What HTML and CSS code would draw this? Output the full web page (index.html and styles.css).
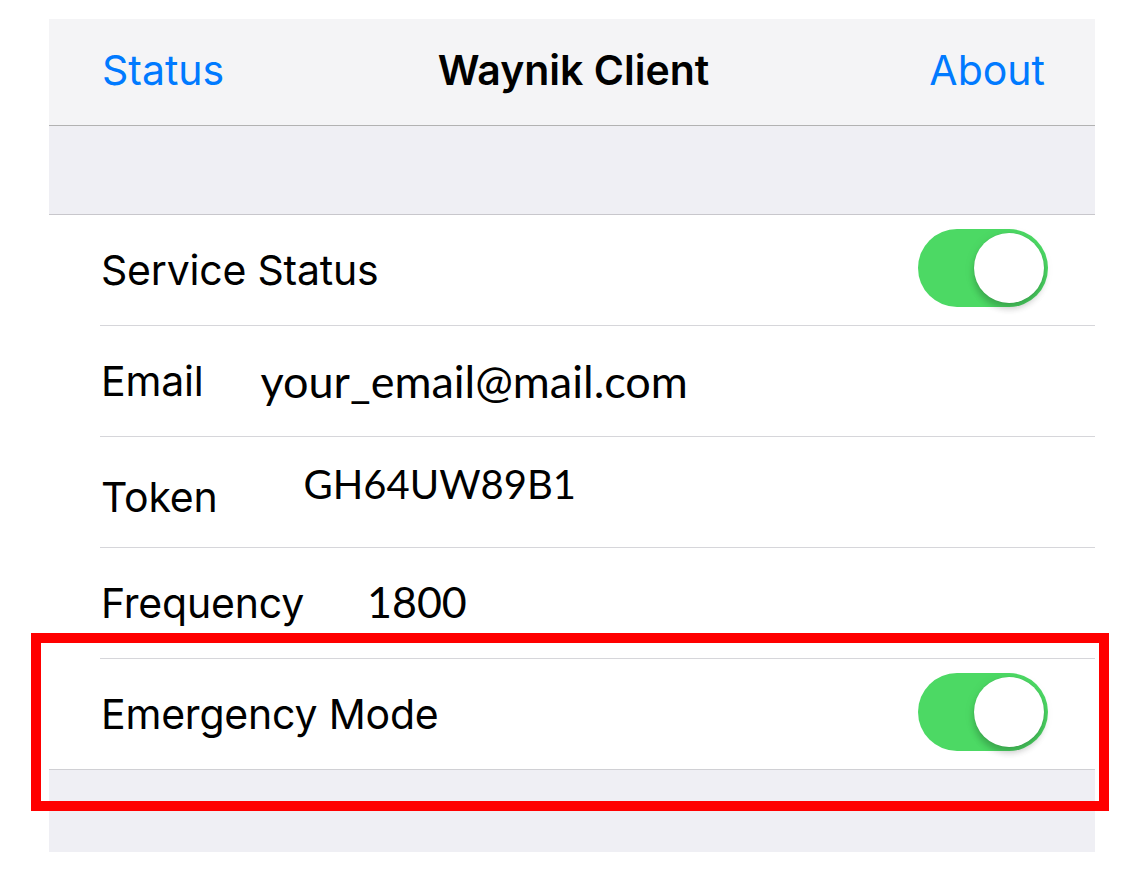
FILE: index.html
```html
<!DOCTYPE html>
<html lang="en">
<head>
<meta charset="utf-8">
<title>Waynik Client</title>
<link rel="stylesheet" href="styles.css">
</head>
<body>
<div class="screen">
  <header class="navbar">
    <span class="nav-link">Status</span>
    <span class="nav-title">Waynik Client</span>
    <span class="nav-link">About</span>
  </header>
  <div class="group-gap"></div>
  <ul class="table">
    <li class="cell">
      <span class="label">Service Status</span>
      <span class="switch"><span class="knob"></span></span>
    </li>
    <li class="cell">
      <span class="label">Email</span>
      <span class="value value-email">your_email@mail.com</span>
    </li>
    <li class="cell">
      <span class="label label-token">Token</span>
      <span class="value value-token">GH64UW89B1</span>
    </li>
    <li class="cell">
      <span class="label">Frequency</span>
      <span class="value value-freq">1800</span>
    </li>
    <li class="cell cell-last">
      <span class="label">Emergency Mode</span>
      <span class="switch"><span class="knob"></span></span>
    </li>
  </ul>
  <div class="group-footer"></div>
</div>
<div class="highlight"></div>
</body>
</html>
```

FILE: styles.css
```css
html, body {
  margin: 0;
  padding: 0;
  background: #ffffff;
}

body {
  position: relative;
  width: 1148px;
  height: 876px;
  overflow: hidden;
  font-family: Inter, "Noto Sans", sans-serif;
  color: #000;
}

.screen {
  margin: 19px 0 0 49px;
  width: 1046px;
}

.navbar {
  background: #f4f4f6;
  border-bottom: 1px solid #b2b2b2;
  display: flex;
  align-items: center;
  justify-content: space-between;
  padding: 0 50px 4px 53px;
  box-sizing: content-box;
  height: 102px;
}

.nav-link {
  color: #007aff;
  font-size: 41px;
  letter-spacing: 0;
  width: 200px;
}

.nav-link:last-child {
  text-align: right;
}

.nav-title {
  font-size: 41px;
  font-weight: 600;
  letter-spacing: 0;
}

.group-gap {
  height: 88px;
  background: #efeff4;
  border-bottom: 1px solid #c8c7cc;
}

.table {
  list-style: none;
  margin: 0;
  padding: 0;
  background: #fff;
}

.cell {
  height: 111px;
  box-sizing: border-box;
  margin-left: 51px;
  padding-right: 47px;
  border-bottom: 1px solid #d6d6da;
  display: flex;
  align-items: center;
}

.cell-last {
  margin-left: 0;
  padding-left: 51px;
  border-bottom-color: #d0d0d4;
}

.label {
  font-size: 41px;
  letter-spacing: -0.2px;
  padding-left: 1px;
}

.label-token {
  position: relative;
  top: 5px;
}

.value {
  font-family: Lato, "Open Sans", sans-serif;
  font-size: 44px;
}

.value-email {
  font-size: 45px;
  margin-left: 57px;
}

.value-token {
  font-size: 40px;
  margin-left: 86px;
  position: relative;
  top: -8px;
}

.value-freq {
  font-size: 43px;
  margin-left: 63px;
  position: relative;
  top: -2px;
}

.switch {
  margin-left: auto;
  width: 130px;
  height: 78px;
  border-radius: 39px;
  background: #4cd964;
  position: relative;
  top: -2px;
  display: flex;
  align-items: center;
  justify-content: flex-end;
  padding-right: 4px;
  box-sizing: border-box;
}

.knob {
  width: 70px;
  height: 70px;
  border-radius: 50%;
  background: #fff;
  box-shadow: 0 6px 6px rgba(0, 0, 0, 0.18), 0 2px 12px rgba(0, 0, 0, 0.08), 0 0 0 0.5px rgba(0, 0, 0, 0.06);
}

.group-footer {
  height: 82px;
  background: #efeff4;
}

.highlight {
  position: absolute;
  left: 31px;
  top: 633px;
  width: 1078px;
  height: 178px;
  box-sizing: border-box;
  border: 10px solid #ff0000;
  pointer-events: none;
}
```
